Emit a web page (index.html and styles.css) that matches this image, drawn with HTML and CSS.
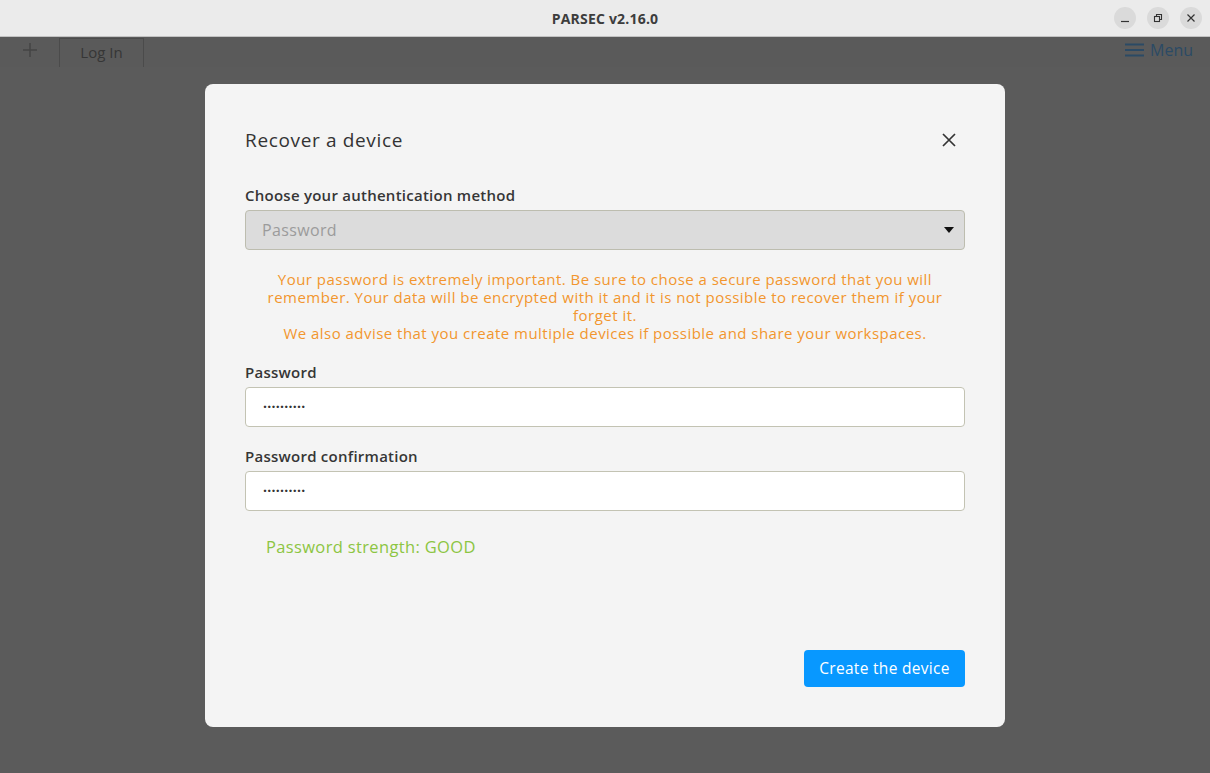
FILE: index.html
```html
<!DOCTYPE html>
<html>
<head>
<meta charset="utf-8">
<link rel="stylesheet" href="styles.css">
</head>
<body>
<div class="titlebar">
  <div class="title">PARSEC v2.16.0</div>
  <div class="wbtns">
    <span class="wbtn"><svg width="10" height="10" viewBox="0 0 10 10"><path d="M1 8.5h8" stroke="#333" stroke-width="1.2"/></svg></span>
    <span class="wbtn"><svg width="10" height="10" viewBox="0 0 10 10"><rect x="1.5" y="3.5" width="5" height="5" fill="none" stroke="#333" stroke-width="1.1"/><path d="M3.5 3.5V1.5h5v5h-2" fill="none" stroke="#333" stroke-width="1.1"/></svg></span>
    <span class="wbtn"><svg width="10" height="10" viewBox="0 0 10 10"><path d="M1.5 1.5l7 7M8.5 1.5l-7 7" stroke="#333" stroke-width="1.2"/></svg></span>
  </div>
</div>
<div class="app">
  <div class="tabbar">
    <div class="plus"><svg width="16" height="16" viewBox="0 0 16 16"><path d="M8 1v14M1 8h14" stroke="#444" stroke-width="1.5"/></svg></div>
    <div class="tab">Log In</div>
    <div class="spacer"></div>
    <div class="menu">
      <svg width="19" height="14" viewBox="0 0 19 14"><path d="M0 1.5h19M0 7h19M0 12.5h19" stroke="#2b4a65" stroke-width="2"/></svg>
      <span>Menu</span>
    </div>
  </div>
  <div class="backdrop">
    <div class="modal">
      <div class="head">
        <h1>Recover a device</h1>
        <span class="close"><svg width="16" height="16" viewBox="0 0 16 16"><path d="M2 2l12 12M14 2L2 14" stroke="#333" stroke-width="1.7"/></svg></span>
      </div>
      <div class="label first">Choose your authentication method</div>
      <div class="select">
        <span>Password</span>
        <svg width="10" height="6" viewBox="0 0 10 6"><path d="M0 0h10L5 6z" fill="#111"/></svg>
      </div>
      <p class="warn">Your password is extremely important. Be sure to chose a secure password that you will remember. Your data will be encrypted with it and it is not possible to recover them if your forget it.<br>We also advise that you create multiple devices if possible and share your workspaces.</p>
      <div class="label">Password</div>
      <div class="input"><span class="dots">··········</span></div>
      <div class="label second">Password confirmation</div>
      <div class="input"><span class="dots">··········</span></div>
      <div class="strength">Password strength: GOOD</div>
      <div class="grow"></div>
      <div class="actions"><button class="btn">Create the device</button></div>
    </div>
  </div>
</div>
</body>
</html>
```
FILE: styles.css
```css
* { box-sizing: border-box; }
html, body { margin: 0; padding: 0; }
body {
  width: 1210px;
  height: 773px;
  overflow: hidden;
  font-family: "Open Sans", "DejaVu Sans", sans-serif;
  background: #5b5b5b;
  display: flex;
  flex-direction: column;
}
.titlebar {
  height: 37px;
  flex: none;
  background: #ebebeb;
  border-bottom: 1px solid #c2c2c2;
  display: flex;
  align-items: center;
  justify-content: center;
  position: relative;
}
.title {
  font-family: "Open Sans", sans-serif;
  font-weight: 700;
  font-size: 14px;
  color: #3d3d3d;
  letter-spacing: 0.2px;
}
.wbtns {
  position: absolute;
  right: 8px;
  top: 7px;
  display: flex;
  gap: 11px;
}
.wbtn {
  width: 22px;
  height: 22px;
  border-radius: 50%;
  background: #dadada;
  display: flex;
  align-items: center;
  justify-content: center;
}
.app {
  flex: 1;
  position: relative;
  display: flex;
  flex-direction: column;
}
.tabbar {
  height: 30px;
  display: flex;
  align-items: stretch;
  background: #5a5a5a;
}
.plus {
  width: 59px;
  display: flex;
  align-items: center;
  justify-content: center;
  padding-bottom: 4px;
}
.tab {
  width: 85px;
  margin-top: 1px;
  border: 1px solid #4b4b4b;
  border-bottom: none;
  display: flex;
  align-items: center;
  justify-content: center;
  font-size: 15px;
  color: #363636;
  padding-bottom: 3px;
}
.spacer { flex: 1; }
.menu {
  display: flex;
  align-items: center;
  gap: 6px;
  padding-right: 17px;
  color: #2b4a65;
  font-size: 16px;
  padding-bottom: 4px;
}
.backdrop {
  position: absolute;
  inset: 0;
  display: flex;
  align-items: center;
  justify-content: center;
}
.modal {
  width: 800px;
  height: 643px;
  background: #f4f4f4;
  border-radius: 8px;
  padding: 40px;
  display: flex;
  flex-direction: column;
  color: #333;
  letter-spacing: 0.35px;
}
.head {
  display: flex;
  align-items: center;
  justify-content: space-between;
  height: 32px;
}
.head h1 {
  margin: 0;
  font-size: 19px;
  font-weight: 500;
  color: #333;
  letter-spacing: 0.65px;
}
.close {
  width: 30px;
  height: 30px;
  display: flex;
  align-items: center;
  justify-content: center;
  margin-right: 1px;
}
.label {
  font-size: 15px;
  font-weight: 600;
  line-height: 20px;
  margin-bottom: 5px;
  color: #363636;
  letter-spacing: 0.25px;
}
.label.first { margin-top: 29px; }
.label.second { margin-top: 19px; }
.select {
  height: 40px;
  background: #dcdcdc;
  border: 1px solid #bdbdaf;
  border-radius: 4px;
  display: flex;
  align-items: center;
  justify-content: space-between;
  padding: 0 10px 0 16px;
  font-size: 16px;
  color: #9b9b9b;
}
.warn {
  margin: 20px 0 20px;
  text-align: center;
  font-size: 15px;
  line-height: 18px;
  color: #f2962e;
  padding: 0 14px;
  letter-spacing: 0.47px;
}
.input {
  height: 40px;
  background: #fff;
  border: 1px solid #c3c3b3;
  border-radius: 4px;
  display: flex;
  align-items: center;
  padding-left: 17px;
}
.dots {
  font-size: 14px;
  letter-spacing: 0.25px;
  color: #333;
  font-weight: bold;
}
.strength {
  margin-top: 25px;
  padding-left: 21px;
  font-size: 16.5px;
  line-height: 22px;
  color: #8cc542;
  letter-spacing: 0.35px;
}
.grow { flex: 1; }
.actions {
  display: flex;
  justify-content: flex-end;
}
.btn {
  width: 161px;
  height: 37px;
  border: none;
  border-radius: 4px;
  background: #0898ff;
  color: #fff;
  font-family: inherit;
  font-size: 15.5px;
  letter-spacing: 0.3px;
  padding: 0;
}
```
